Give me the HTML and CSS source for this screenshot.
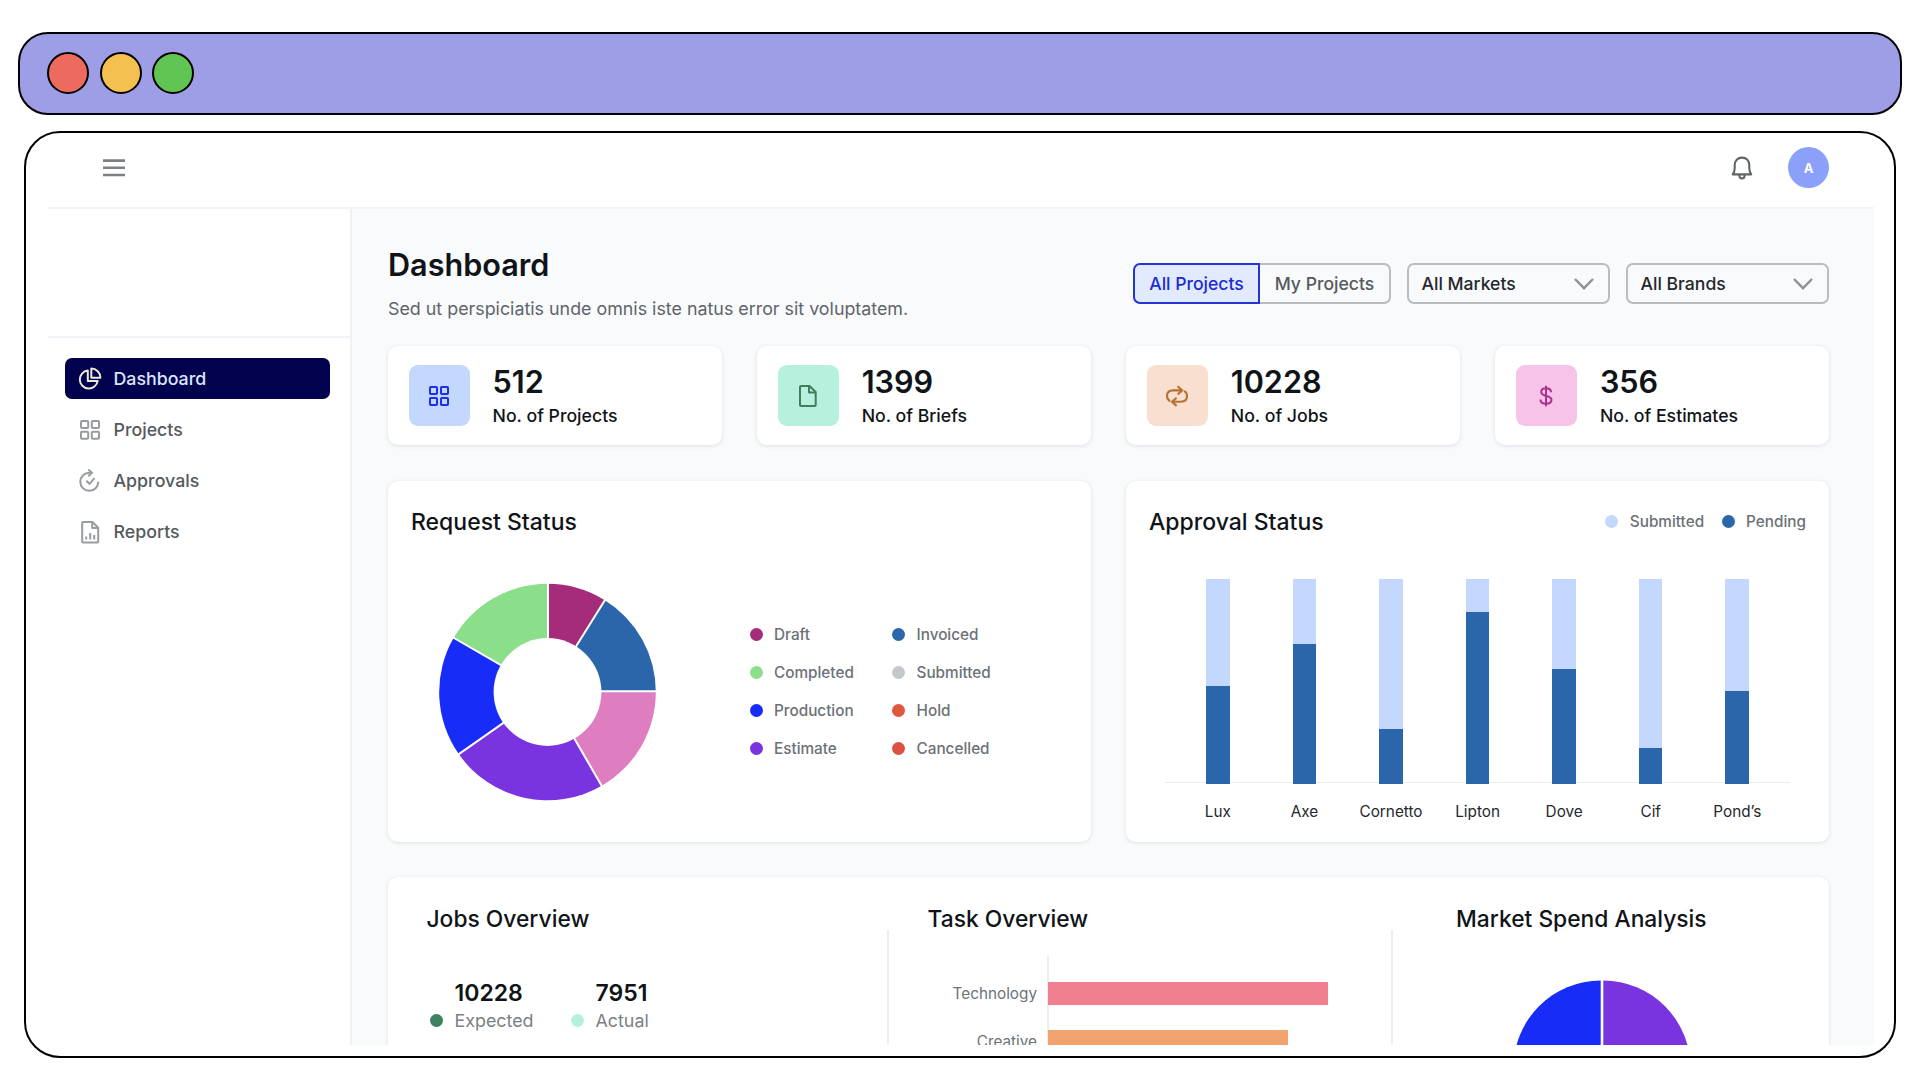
FILE: index.html
```html
<!DOCTYPE html>
<html lang="en">
<head>
  <meta charset="UTF-8" />
  <meta name="viewport" content="width=device-width, initial-scale=1.0"/>
  <title>Dashboard</title>
  <link rel="stylesheet" href="styles.css">
</head>
<body>
  <div class="titlebar">
    <span class="light red"></span>
    <span class="light yellow"></span>
    <span class="light green"></span>
  </div>

  <div class="window">
    <header class="topbar">
      <svg class="menu-icon" width="22" height="18" viewBox="0 0 22 18" stroke="#7d8186" stroke-width="2.6">
        <path d="M0 1.6h22M0 8.8h22M0 16h22"/>
      </svg>
      <div class="topbar-right">
        <svg width="22" height="24" viewBox="0 0 22 24" fill="none" stroke="#5f6569" stroke-width="2.1" stroke-linejoin="round">
          <path d="M1.8 18.4c1.4-1.9 1.9-3.6 1.9-6.1V9.3c0-4.7 2.9-7.7 7.3-7.7s7.3 3 7.3 7.7v3c0 2.5.5 4.2 1.9 6.1z"/>
          <path d="M8.4 18.8v1a2.6 2.6 0 0 0 5.2 0v-1"/>
        </svg>
        <div class="avatar">A</div>
      </div>
    </header>

    <div class="layout">
      <aside class="sidebar">
        <div class="logo-space"></div>
        <nav>
          <a class="nav-item active">
            <svg width="24" height="24" viewBox="0 0 24 24" fill="none" stroke="#e9ead9" stroke-width="2" stroke-linejoin="round">
              <path d="M9.8 3.6a9 9 0 1 0 9.9 10.3H9.8z"/>
              <path d="M13.3 1.6v9.1h9.1a9.2 9.2 0 0 0-9.1-9.1z"/>
            </svg>
            Dashboard
          </a>
          <a class="nav-item">
            <svg width="24" height="24" viewBox="0 0 24 24" fill="none" stroke="#989ca1" stroke-width="2">
              <rect x="3" y="3" width="7.2" height="7" rx="1"/>
              <rect x="13.8" y="3" width="7.2" height="7" rx="1"/>
              <rect x="3" y="13.7" width="7.2" height="7" rx="1"/>
              <rect x="13.8" y="13.7" width="7.2" height="7" rx="1"/>
            </svg>
            Projects
          </a>
          <a class="nav-item">
            <svg width="24" height="24" viewBox="0 0 24 24" fill="none" stroke="#989ca1" stroke-width="2">
              <path d="M12.5 3.8h-1A9 9 0 1 0 20.3 12.8"/>
              <path d="M10.3.5l3.6 3.3-3.6 3.4M8.3 11.8l3.2 3 5-5.6"/>
            </svg>
            Approvals
          </a>
          <a class="nav-item">
            <svg width="24" height="24" viewBox="0 0 24 24" fill="none" stroke="#989ca1" stroke-width="2" stroke-linejoin="round">
              <path d="M5.1 2h9.400l5.700 5.800v13.700a.9.9 0 0 1-.9.9H5.100a.9.9 0 0 1-.9-.9V2.900a.9.9 0 0 1 .9-.9z"/>
              <path d="M14.2 2v6h6M8.2 16.500v3M12.200 13v6.500M16.200 15v4.500"/>
            </svg>
            Reports
          </a>
        </nav>
      </aside>

      <main class="content">
        <div class="page-head">
          <div>
            <h1>Dashboard</h1>
            <p>Sed ut perspiciatis unde omnis iste natus error sit voluptatem.</p>
          </div>
          <div class="filters">
            <div class="segmented">
              <button class="selected">All Projects</button>
              <button>My Projects</button>
            </div>
            <div class="select">All Markets
              <svg width="20" height="12" viewBox="0 0 20 12" fill="none" stroke="#8f9498" stroke-width="2.5"><path d="M1 1l9 9.2L19 1"/></svg>
            </div>
            <div class="select">All Brands
              <svg width="20" height="12" viewBox="0 0 20 12" fill="none" stroke="#8f9498" stroke-width="2.5"><path d="M1 1l9 9.2L19 1"/></svg>
            </div>
          </div>
        </div>

        <section class="stats">
          <div class="card stat">
            <div class="tile blue">
              <svg width="24" height="24" viewBox="0 0 24 24" fill="none" stroke="#1c2ff0" stroke-width="2">
                <rect x="3" y="3" width="7" height="7" rx=".8"/>
                <rect x="14" y="3" width="7" height="7" rx=".8"/>
                <rect x="3" y="14" width="7" height="7" rx=".8"/>
                <rect x="14" y="14" width="7" height="7" rx=".8"/>
              </svg>
            </div>
            <div>
              <div class="stat-value">512</div>
              <div class="stat-label">No. of Projects</div>
            </div>
          </div>
          <div class="card stat">
            <div class="tile mint">
              <svg width="24" height="24" viewBox="0 0 24 24" fill="none" stroke="#477a5c" stroke-width="2" stroke-linejoin="round">
                <path d="M4.9 2h8.600l6.200 6v13a.9.9 0 0 1-.9.9H4.900A.9.9 0 0 1 4 21V2.900a.9.9 0 0 1 .9-.9z"/>
                <path d="M13 2v6.500h6.500"/>
              </svg>
            </div>
            <div>
              <div class="stat-value">1399</div>
              <div class="stat-label">No. of Briefs</div>
            </div>
          </div>
          <div class="card stat">
            <div class="tile peach">
              <svg width="24" height="24" viewBox="0 0 24 24" fill="none" stroke="#b57331" stroke-width="2.1">
                <path d="M5 17.3C2.9 15.8 2 14 2 12c0-3.500 2.300-5.600 6-5.600h8.500M12.600 2.300l4.600 4.100-4.600 4.100"/>
                <path d="M19.200 6.900C21.200 8.200 22 10 22 12.100c0 3.500-2.300 5.700-6 5.700H7.800M11.600 13.700L7 17.800l4.600 4.100"/>
              </svg>
            </div>
            <div>
              <div class="stat-value">10228</div>
              <div class="stat-label">No. of Jobs</div>
            </div>
          </div>
          <div class="card stat">
            <div class="tile pink">
              <svg width="24" height="24" viewBox="0 0 24 24" fill="none" stroke="#ab318b" stroke-width="2">
                <path d="M12 1.8v20.500M17 8.300c0-2.500-2-4-5-4s-4.800 1.500-4.800 3.800c0 5.300 10.300 2.300 10.300 7.700 0 2.500-2.200 4-5.500 4s-5.500-1.600-5.500-4.300"/>
              </svg>
            </div>
            <div>
              <div class="stat-value">356</div>
              <div class="stat-label">No. of Estimates</div>
            </div>
          </div>
        </section>

        <section class="charts">
          <div class="card panel">
            <h2>Request Status</h2>
            <div class="request-body">
              <svg class="donut" width="218" height="218" viewBox="-108.5 -109 218 218">
                <path fill="#a52c7b" d="M0 0V-108.3A108.3 108.3 0 0 1 57.4 -91.8z"/>
                <path fill="#2a66a9" d="M0 0L57.4 -91.8A108.3 108.3 0 0 1 108.3 0z"/>
                <path fill="#de7dc0" d="M0 0H108.3A108.3 108.3 0 0 1 54.2 93.8z"/>
                <path fill="#7933df" d="M0 0L54.2 93.8A108.3 108.3 0 0 1 -88.7 62.1z"/>
                <path fill="#172cf6" d="M0 0L-88.7 62.1A108.3 108.3 0 0 1 -93.8 -54.2z"/>
                <path fill="#8bdf8a" d="M0 0L-93.8 -54.2A108.3 108.3 0 0 1 0 -108.3z"/>
                <path stroke="#fff" stroke-width="2" d="M.5 0V-110M0 0L58.3 -93.3M0 -.8H110M0 0L55 95.3M0 0L-90.1 63.1M0 0L-95.3 -55"/>
                <circle fill="#fff" r="53.9"/>
              </svg>
              <ul class="legend request-legend">
                <li><i class="dot draft"></i>Draft</li>
                <li><i class="dot invoiced"></i>Invoiced</li>
                <li><i class="dot completed"></i>Completed</li>
                <li><i class="dot submitted"></i>Submitted</li>
                <li><i class="dot production"></i>Production</li>
                <li><i class="dot hold"></i>Hold</li>
                <li><i class="dot estimate"></i>Estimate</li>
                <li><i class="dot cancelled"></i>Cancelled</li>
              </ul>
            </div>
          </div>

          <div class="card panel">
            <div class="panel-head">
              <h2>Approval Status</h2>
              <ul class="legend approval-legend">
                <li><i class="dot light-blue"></i>Submitted</li>
                <li><i class="dot invoiced"></i>Pending</li>
              </ul>
            </div>
            <div class="bars">
              <div class="bar"><span style="height: 47.8%"></span></div>
              <div class="bar"><span style="height: 68.4%"></span></div>
              <div class="bar"><span style="height: 26.8%"></span></div>
              <div class="bar"><span style="height: 83.8%"></span></div>
              <div class="bar"><span style="height: 55.9%"></span></div>
              <div class="bar"><span style="height: 17.5%"></span></div>
              <div class="bar"><span style="height: 45.4%"></span></div>
            </div>
            <div class="bar-labels">
              <span>Lux</span>
              <span>Axe</span>
              <span>Cornetto</span>
              <span>Lipton</span>
              <span>Dove</span>
              <span>Cif</span>
              <span>Pond’s</span>
            </div>
          </div>
        </section>

        <section class="card overview">
          <div class="overview-col jobs">
            <h2>Jobs Overview</h2>
            <div class="overview-body">
              <div class="job">
                <b>10228</b>
                <i class="dot expected"></i>
                <span>Expected</span>
              </div>
              <div class="job">
                <b>7951</b>
                <i class="dot actual"></i>
                <span>Actual</span>
              </div>
            </div>
          </div>
          <div class="overview-col tasks">
            <h2>Task Overview</h2>
            <div class="overview-body">
              <div class="task-labels">
                <span>Technology</span>
                <span>Creative</span>
              </div>
              <div class="task-bars">
                <div class="task-bar technology" style="width: 280px"></div>
                <div class="task-bar creative" style="width: 240px"></div>
              </div>
            </div>
          </div>
          <div class="overview-col market">
            <h2>Market Spend Analysis</h2>
            <div class="overview-body">
              <svg width="178" height="178" viewBox="0 0 178 178">
                <path fill="#172cf6" d="M87.7 0.5A87.3 88 0 0 0 87.7 176.5z"/>
                <path fill="#7933df" d="M90.3 0.5A87.3 88 0 0 1 90.3 176.5z"/>
              </svg>
            </div>
          </div>
        </section>
      </main>
    </div>
  </div>
</body>
</html>
```

FILE: styles.css
```css
* {
  box-sizing: border-box;
}

body {
  font-family: Inter, 'Liberation Sans', sans-serif;
  font-size: 17.85px;
  color: #101418;
  background: #fff;
  margin: 0;
  padding: 32px 18px 0 18px;
  height: 1080px;
  overflow: hidden;
}

h1, h2, p, ul {
  margin: 0;
  padding: 0;
}

.titlebar {
  display: flex;
  align-items: center;
  gap: 10.4px;
  width: 1884px;
  height: 83px;
  padding: 0 0 1px 27.2px;
  background: #9e9ee6;
  border: 2px solid #000;
  border-radius: 30px;
}

.light {
  width: 42px;
  height: 42px;
  border: 2px solid #000;
  border-radius: 50%;
}

.light.red {
  background: #ec6a5e;
}

.light.yellow {
  background: #f4c04f;
}

.light.green {
  background: #61c554;
}

.window {
  width: 1872px;
  height: 927px;
  margin: 16px 0 0 6px;
  padding: 0 20px 11px 22px;
  border: 2px solid #000;
  border-radius: 36px;
  background: #fff;
}

.topbar {
  display: flex;
  align-items: center;
  justify-content: space-between;
  height: 76px;
  padding: 0 45px 5px 54.5px;
  border-bottom: 2px solid #f2f3f6;
}

.topbar-right {
  display: flex;
  align-items: center;
  gap: 35px;
}

.avatar {
  width: 41px;
  height: 41px;
  border-radius: 50%;
  background: #8ba0f8;
  color: #fff;
  font-size: 13px;
  font-weight: 700;
  line-height: 42px;
  text-align: center;
}

.layout {
  display: flex;
  height: 836px;
  overflow: hidden;
}

.sidebar {
  width: 304px;
  border-right: 2px solid #f0f1f4;
}

.logo-space {
  height: 129px;
  border-bottom: 2px solid #f2f3f8;
}

nav {
  display: flex;
  flex-direction: column;
  gap: 10px;
  padding: 20px 20px 0 17px;
}

.nav-item {
  display: flex;
  align-items: center;
  gap: 11.5px;
  height: 41px;
  padding-left: 13px;
  border-radius: 7px;
  color: #55595e;
  font-size: 17.8px;
  font-weight: 500;
}

.nav-item.active {
  background: #02014d;
  color: #dbe5fb;
}

.content {
  flex: 1;
  padding: 36px 45px 0 36px;
  background: #f9fafc;
}

.page-head {
  display: flex;
  justify-content: space-between;
  height: 101px;
}

h1 {
  font-size: 30.6px;
  font-weight: 600;
  line-height: 40px;
}

.page-head p {
  margin-top: 11px;
  color: #5f6469;
  line-height: 26px;
}

.filters {
  display: flex;
  gap: 15.5px;
  padding-top: 18px;
  font-size: 17.6px;
  font-weight: 500;
}

.segmented {
  display: flex;
}

.segmented button {
  height: 41px;
  width: 131px;
  padding: 0;
  border: 2px solid #b9bcc1;
  border-left: none;
  border-radius: 0 7px 7px 0;
  background: transparent;
  color: #55595e;
  font: inherit;
}

.segmented .selected {
  width: 127px;
  border: 2px solid #2634d4;
  border-radius: 7px 0 0 7px;
  background: #e1eafe;
  color: #1c2cd3;
}

.select {
  display: flex;
  align-items: center;
  justify-content: space-between;
  width: 203.5px;
  height: 41px;
  padding: 0 14px 0 13px;
  border: 2px solid #b9bcc1;
  border-radius: 7px;
  color: #24282c;
}

.card {
  background: #fff;
  border-radius: 10px;
  box-shadow: 0 1px 4px rgba(20, 30, 60, 0.12);
}

.stats {
  display: grid;
  grid-template-columns: repeat(4, 1fr);
  gap: 35.5px;
}

.stat {
  display: flex;
  align-items: center;
  gap: 23px;
  height: 99px;
  padding-left: 20.5px;
}

.tile {
  display: flex;
  align-items: center;
  justify-content: center;
  width: 61px;
  height: 61px;
  border-radius: 9px;
}

.tile.blue {
  background: #c4d8fd;
}

.tile.mint {
  background: #b5f1dd;
}

.tile.peach {
  background: #f9dfcf;
}

.tile.pink {
  background: #f6c4e8;
}

.stat-value {
  padding-top: 3px;
  font-size: 30.6px;
  font-weight: 600;
  line-height: 36px;
}

.stat-label {
  font-size: 17.7px;
  font-weight: 500;
  line-height: 31px;
}

.charts {
  display: grid;
  grid-template-columns: 1fr 1fr;
  gap: 35px;
  margin-top: 36px;
}

.panel {
  height: 361px;
  padding: 27px 23px 0;
}

h2 {
  font-size: 23px;
  font-weight: 500;
  line-height: 28px;
}

.panel-head {
  display: flex;
  justify-content: space-between;
}

.legend {
  list-style: none;
  color: #6c7177;
  font-size: 15.3px;
  font-weight: 500;
}

.legend li {
  display: flex;
  align-items: center;
}

.dot {
  width: 13px;
  height: 13px;
  margin-right: 11.5px;
  border-radius: 50%;
}

.draft { background: #a52c7b; }
.invoiced { background: #2a66a9; }
.completed { background: #8bdf8a; }
.submitted { background: #c4c8cd; }
.production { background: #172cf6; }
.hold { background: #e0563f; }
.estimate { background: #7933df; }
.cancelled { background: #dc5044; }
.light-blue { background: #c4d8fd; }
.expected { background: #3d8260; }
.actual { background: #b5f1dd; }

.request-body {
  display: flex;
  align-items: center;
  margin-top: 46.5px;
  padding-left: 27.5px;
}

.donut {
  margin-right: 93px;
}

.request-legend {
  display: grid;
  grid-template-columns: 142.5px 142.5px;
  grid-auto-rows: 38.2px;
}

.approval-legend {
  display: flex;
  gap: 17.5px;
  height: 26px;
}

.bars {
  display: flex;
  justify-content: space-between;
  width: 625px;
  height: 205px;
  margin: 43px 0 0 16px;
  padding: 0 41px;
  background: linear-gradient(#e9ebed, #e9ebed) 0 203px / 100% 1px no-repeat;
}

.bar {
  display: flex;
  align-items: flex-end;
  width: 23.5px;
  background: #c4d8fd;
}

.bar span {
  width: 100%;
  background: #2a66a9;
}

.bar-labels {
  display: grid;
  grid-template-columns: repeat(7, 86.6px);
  margin: 17px 0 0 25.5px;
  color: #24282c;
  font-size: 15.3px;
  line-height: 22px;
  text-align: center;
}

.overview {
  display: grid;
  grid-template-columns: 501px 504px 1fr;
  margin-top: 35px;
  height: 400px;
  padding-top: 31px;
}

.overview h2 {
  font-size: 22.8px;
  line-height: 22px;
  padding-left: 38.5px;
}

.overview-body {
  display: flex;
  height: 340px;
  border-right: 2px solid #eceef0;
}

.jobs .overview-body {
  gap: 37.5px;
  padding: 49px 0 0 42px;
}

.job {
  display: grid;
  grid-template-columns: 13px auto;
  grid-template-rows: 28px 26px;
  column-gap: 11.5px;
  align-content: start;
  align-items: center;
  color: #7b8086;
}

.job b {
  grid-column: 2;
  color: #101418;
  font-size: 23px;
  font-weight: 600;
}

.task-labels {
  display: flex;
  flex-direction: column;
  gap: 26px;
  width: 148px;
  padding-top: 53px;
  color: #6c7177;
  font-size: 15.3px;
  line-height: 22px;
  text-align: right;
}

.task-bars {
  margin: 26px 0 0 10px;
  padding-top: 26px;
  border-left: 2px solid #eceef0;
}

.task-bar {
  height: 23px;
  margin: 0 0 25px -1px;
}

.technology {
  background: #f08090;
}

.creative {
  background: #f2a26f;
}

.market h2 {
  padding-left: 63px;
}

.market .overview-body {
  padding: 50px 0 0 120px;
  border-right: none;
}
```
